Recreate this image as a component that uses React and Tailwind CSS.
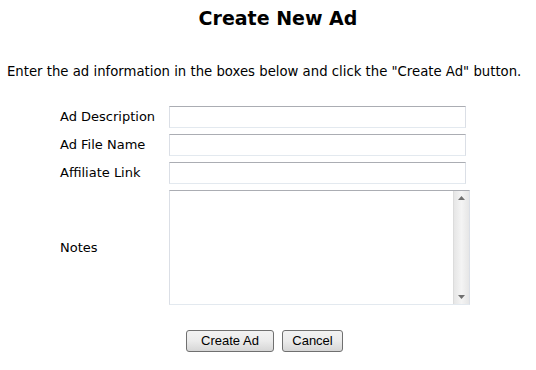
const fields = [
  { label: "Ad Description" },
  { label: "Ad File Name" },
  { label: "Affiliate Link" },
];

const btn =
  "h-[22px] rounded-[3px] border border-[#707070] bg-gradient-to-b from-[#f2f2f2] via-[#ebebeb] to-[#d6d6d6] text-[13px] text-black [font-family:'Liberation_Sans',Arial,sans-serif]";

const box =
  "border border-[#dbdfe6] border-t-[#abadb3] border-b-[#e3e9ef] bg-white";

export default function App() {
  return (
    <div className="w-[536px] h-[370px] bg-white text-black text-[13px] [font-family:'DejaVu_Sans',Verdana,sans-serif]">
      <h1 className="pt-[7px] text-center text-[19px] font-bold leading-[22px] pl-[20px]">
        Create New Ad
      </h1>

      <p className="mt-[35px] pl-[7px] text-[13.25px] leading-[16px]">
        Enter the ad information in the boxes below and click the "Create Ad" button.
      </p>

      <div className="mt-[26px] pl-[60px] flex flex-col gap-[6px]">
        {fields.map((f) => (
          <div key={f.label} className="flex items-center">
            <label className="w-[109px] leading-[16px]">{f.label}</label>
            <input type="text" className={`${box} w-[297px] h-[22px] outline-none`} />
          </div>
        ))}

        <div className="flex items-center">
          <label className="w-[109px] leading-[16px]">Notes</label>
          <div className={`${box} w-[301px] h-[115px] flex`}>
            <textarea className="flex-1 resize-none outline-none" />
            {/* fake classic scrollbar */}
            <div className="w-[16px] h-full bg-gradient-to-r from-[#e6e6e6] via-[#f4f4f4] to-[#e6e6e6] border-l border-[#dcdcdc] flex flex-col justify-between items-center py-[5px]">
              <svg width="7" height="4" viewBox="0 0 7 4">
                <path d="M3.5 0 L7 4 L0 4 Z" fill="#707070" />
              </svg>
              <svg width="7" height="4" viewBox="0 0 7 4">
                <path d="M0 0 L7 0 L3.5 4 Z" fill="#707070" />
              </svg>
            </div>
          </div>
        </div>
      </div>

      <div className="mt-[25px] flex justify-center gap-[8px] pr-[7px]">
        <button className={`${btn} w-[88px]`}>Create Ad</button>
        <button className={`${btn} w-[61px]`}>Cancel</button>
      </div>
    </div>
  );
}
